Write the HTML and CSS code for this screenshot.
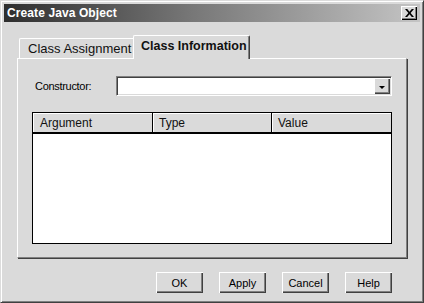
FILE: index.html
```html
<!DOCTYPE html>
<html>
<head>
<meta charset="utf-8">
<link rel="stylesheet" href="styles.css">
</head>
<body>
<div class="window">
  <div class="titlebar">
    <span class="title">Create Java Object</span>
    <span class="close-btn">
      <svg width="9" height="8" viewBox="0 0 9 8"><path d="M0 0L2.2 0L4.5 2.8L6.8 0L9 0L5.6 4L9 8L6.8 8L4.5 5.2L2.2 8L0 8L3.4 4Z" fill="#000"/></svg>
    </span>
  </div>
  <div class="content">
    <div class="tabs">
      <div class="tab">Class Assignment</div>
      <div class="tab tab-active">Class Information</div>
    </div>
    <div class="panel">
      <div class="field-row">
        <span class="label">Constructor:</span>
        <div class="combo">
          <span class="combo-btn"><span class="arrow"></span></span>
        </div>
      </div>
      <div class="table">
        <div class="thead">
          <div class="th th-arg">Argument</div>
          <div class="th th-type">Type</div>
          <div class="th th-val">Value</div>
        </div>
        <div class="tbody"></div>
      </div>
    </div>
    <div class="buttons">
      <div class="btn">OK</div>
      <div class="btn">Apply</div>
      <div class="btn">Cancel</div>
      <div class="btn">Help</div>
    </div>
  </div>
</div>
</body>
</html>
```

FILE: styles.css
```css
html, body {
  margin: 0;
  padding: 0;
  background: #dadada;
}
.window {
  width: 424px;
  height: 303px;
  box-sizing: border-box;
  border: 1px solid;
  border-color: #dcdcdc #404040 #404040 #dcdcdc;
  box-shadow: inset 1px 1px 0 #fff, inset -1px -1px 0 #808080;
  padding: 3px 3px;
  background: #dadada;
  font-family: "Liberation Sans", Arial, sans-serif;
  color: #000;
}
.titlebar {
  height: 18px;
  background: linear-gradient(to right, #2e2e2e 0%, #777 45%, #c4c4c4 100%);
  display: flex;
  align-items: center;
  justify-content: space-between;
  padding: 0 3px 0 3px;
}
.title {
  color: #fff;
  font-weight: bold;
  font-size: 12px;
  letter-spacing: 0.1px;
}
.close-btn {
  width: 16px;
  height: 14px;
  box-sizing: border-box;
  background: #dadada;
  box-shadow: inset 1px 1px 0 #fff, inset -1px -1px 0 #000, inset -2px -2px 0 #808080;
  display: flex;
  align-items: center;
  justify-content: center;
}
.content {
  padding: 13px 13px 0 13px;
}
.tabs {
  display: flex;
  align-items: flex-end;
  height: 23px;
  padding-left: 2px;
}
.tab {
  box-sizing: border-box;
  height: 20px;
  width: 114px;
  border-top: 1px solid #fff;
  border-left: 1px solid #fff;
  font-size: 13px;
  padding: 2px 0 0 8px;
  color: #111;
  border-radius: 2px 0 0 0;
}
.tab-active {
  position: relative;
  z-index: 1;
  height: 24px;
  width: 117px;
  margin-bottom: -1px;
  background: #dadada;
  border-right: 1px solid #404040;
  box-shadow: inset -1px 0 0 #808080;
  font-weight: bold;
  font-size: 12.5px;
  padding: 3px 0 0 7px;
  border-radius: 2px 2px 0 0;
}
.panel {
  box-sizing: border-box;
  width: 390px;
  height: 200px;
  border-top: 1px solid #fff;
  border-left: 1px solid #fff;
  border-right: 1px solid #808080;
  border-bottom: 1px solid #808080;
  box-shadow: 1px 1px 0 #404040;
  padding: 17px 0 0 14px;
}
.field-row {
  display: flex;
  align-items: center;
  height: 20px;
}
.label {
  font-size: 11px;
  margin-left: 3px;
  width: 81px;
  letter-spacing: -0.3px;
}
.combo {
  box-sizing: border-box;
  width: 276px;
  height: 20px;
  background: #fff;
  border-top: 1px solid #808080;
  border-left: 1px solid #808080;
  border-right: 1px solid #fff;
  border-bottom: 1px solid #fff;
  box-shadow: inset 1px 1px 0 #404040, inset -1px -1px 0 #dadada;
  display: flex;
  justify-content: flex-end;
  padding: 1px 1px 1px 0;
}
.combo-btn {
  width: 16px;
  height: 16px;
  box-sizing: border-box;
  background: #dadada;
  box-shadow: inset 1px 1px 0 #fff, inset -1px -1px 0 #404040, inset -2px -2px 0 #808080;
  display: flex;
  align-items: center;
  justify-content: center;
}
.arrow {
  width: 0;
  height: 0;
  border-left: 3px solid transparent;
  border-right: 3px solid transparent;
  border-top: 3px solid #000;
  margin-top: 2px;
}
.table {
  margin-top: 16px;
  width: 360px;
  height: 132px;
  box-sizing: border-box;
  border: 1px solid #000;
  display: flex;
  flex-direction: column;
}
.thead {
  display: flex;
  height: 21px;
  box-sizing: border-box;
  border-bottom: 2px solid #000;
  background: #dadada;
}
.th {
  box-sizing: border-box;
  font-size: 12px;
  padding: 3px 0 0 7px;
  box-shadow: inset 1px 1px 0 #fff;
  border-right: 1px solid #000;
  color: #111;
}
.th-arg { width: 120px; }
.th-type { width: 119px; padding-left: 6px; }
.th-val { flex: 1; border-right: none; padding-left: 6px; }
.tbody {
  flex: 1;
  background: #fff;
}
.buttons {
  display: flex;
  justify-content: flex-end;
  gap: 16px;
  margin-top: 14px;
  padding-right: 15px;
}
.btn {
  box-sizing: border-box;
  width: 47px;
  height: 21px;
  font-size: 11px;
  display: flex;
  align-items: center;
  justify-content: center;
  background: #dadada;
  box-shadow: inset 1px 1px 0 #fff, inset -1px -1px 0 #404040, inset -2px -2px 0 #808080;
}
```
